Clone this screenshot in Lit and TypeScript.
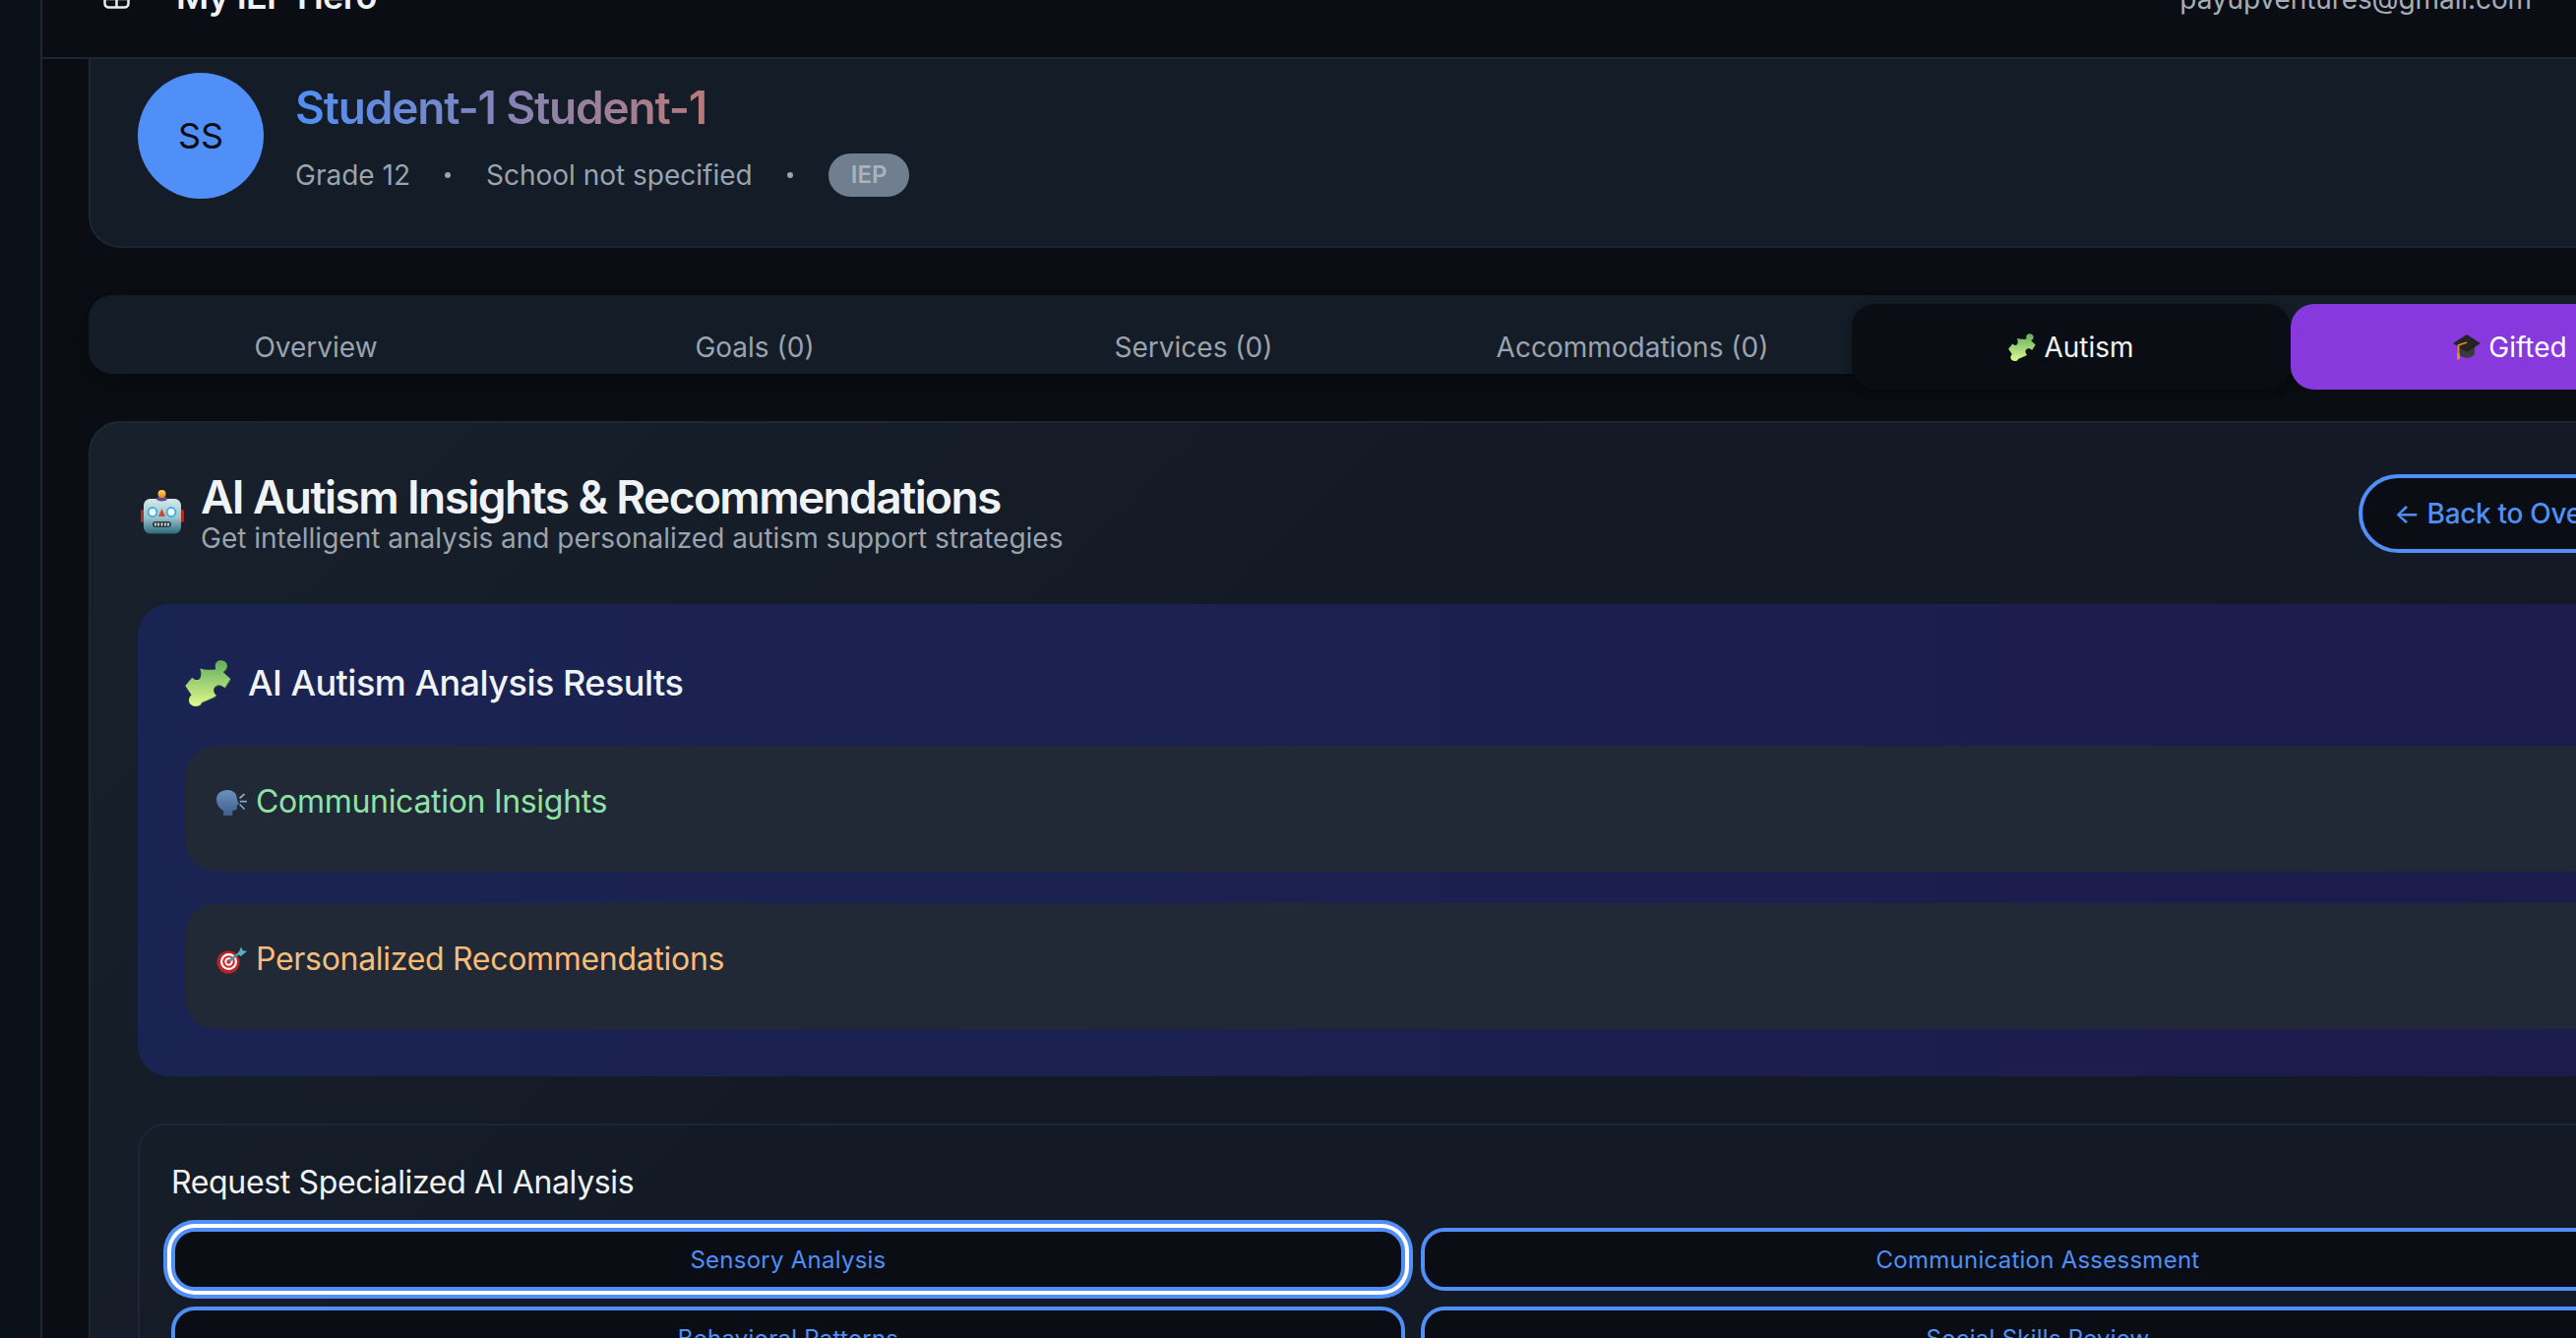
import { LitElement, css, html, svg } from 'lit'
import { customElement, state } from 'lit/decorators.js'
import { classMap } from 'lit/directives/class-map.js'

const PUZZLE_D =
  'M100 86C115 90 135 92 150 88C144 70 154 60 168 61C184 62 192 80 178 92C174 95 172 96 174 98L196 118L178 146C168 136 156 134 148 142C140 150 142 162 152 170C140 178 120 186 106 192C104 204 84 208 72 198C62 188 66 176 74 168L55 140L76 114C86 124 98 124 102 114C106 104 104 94 100 86Z'

const puzzle = (cls: string) => html`
  <svg class=${cls} viewBox="54 60 144 144" aria-hidden="true">
    <defs>
      <linearGradient id="pz-${cls}" x1="0" y1="0" x2="0" y2="1">
        <stop offset="0" stop-color="#62ad5c" />
        <stop offset="1" stop-color="#e0f98f" />
      </linearGradient>
    </defs>
    <path transform="translate(1 3)" fill="#3a5a30" d=${PUZZLE_D} />
    <path fill="url(#pz-${cls})" d=${PUZZLE_D} />
  </svg>
`

const robot = html`
  <svg class="ico-robot" viewBox="0 0 44 46" aria-hidden="true">
    <defs>
      <linearGradient id="rb-head" x1="0" y1="0" x2="0" y2="1">
        <stop offset="0" stop-color="#d5ebec" />
        <stop offset=".55" stop-color="#98c3c8" />
        <stop offset="1" stop-color="#2c6a7d" />
      </linearGradient>
      <linearGradient id="rb-ball" x1="0" y1="0" x2="0" y2="1">
        <stop offset="0" stop-color="#ffd75a" />
        <stop offset="1" stop-color="#e8861a" />
      </linearGradient>
    </defs>
    <rect x="0" y="21" width="4" height="13" rx="1.5" fill="#a92c26" />
    <rect x="40" y="21" width="4" height="13" rx="1.5" fill="#a92c26" />
    <rect x="3" y="10" width="38" height="35.5" rx="6.5" fill="url(#rb-head)" />
    <ellipse cx="21.5" cy="10" rx="5.5" ry="2.6" fill="#64498f" />
    <circle cx="21.5" cy="5" r="4" fill="url(#rb-ball)" />
    <circle cx="12" cy="23.5" r="4.4" fill="#fff" stroke="#3eb0ec" stroke-width="2" />
    <circle cx="31" cy="23.5" r="4.4" fill="#fff" stroke="#3eb0ec" stroke-width="2" />
    <polygon points="21.5,20 25,28 18,28" fill="#c9493f" />
    <rect x="12" y="33" width="19" height="6" rx="3" fill="#2c3c44" />
    <path d="M15 34.5v3M18 34.5v3M21.5 34.5v3M25 34.5v3M28 34.5v3" stroke="#e8eef0" stroke-width="1.6" />
  </svg>
`

const speaker = html`
  <svg class="ico-small" viewBox="0 0 31 28" aria-hidden="true">
    <defs>
      <linearGradient id="sp-head" x1="0" y1="0" x2="0" y2="1">
        <stop offset="0" stop-color="#6c90bd" />
        <stop offset="1" stop-color="#3f5f8c" />
      </linearGradient>
    </defs>
    <path
      fill="url(#sp-head)"
      d="M7 27V22C3 20 0 15.5 0 10.5C0 4.500 5 1 11 1C16.5 1 20 4 20.5 8L21.5 12.5L23 15L21 16L20.8 19.5C20.5 21.5 19 22 16.5 21.8L16 27Z"
    />
    <path d="M24 9L28 5.5M24.5 12.7H30.5M24 16L28 20" stroke="#86a8c4" stroke-width="1.7" stroke-linecap="round" />
  </svg>
`

const dart = html`
  <svg class="ico-small" viewBox="0 0 31 28" aria-hidden="true">
    <circle cx="12" cy="16" r="11.5" fill="#b92426" />
    <circle cx="12.5" cy="15.5" r="8.5" fill="#fff" />
    <circle cx="12.5" cy="15.5" r="6.3" fill="#d0292c" />
    <circle cx="12.5" cy="15.5" r="4.2" fill="#fff" />
    <circle cx="12.5" cy="15.5" r="2.2" fill="#d0292c" />
    <path d="M13 15L24 6" stroke="#4d8f9c" stroke-width="2.4" />
    <path d="M22 8L25 0.5L26.5 4L31 5L24.5 10Z" fill="#57b4c4" />
  </svg>
`

const cap = html`
  <svg class="ico-cap" viewBox="0 0 28 26" aria-hidden="true">
    <path d="M6 12V20C10 25 18 25 22 20V12Z" fill="#3b3b3d" />
    <polygon points="14,0 28,9 14,18 0,9" fill="#232325" />
    <path d="M14 8L5.5 11V22" fill="none" stroke="#e08a24" stroke-width="1.8" />
    <rect x="4" y="19" width="3" height="6.5" rx="1" fill="#e08a24" />
  </svg>
`

const TABS = [
  { label: 'Overview' },
  { label: 'Goals (0)' },
  { label: 'Services (0)' },
  { label: 'Accommodations (0)' },
  { label: 'Autism', icon: puzzle('ico-tab'), kind: 'dark' },
  { label: 'Gifted', icon: cap, kind: 'purple' },
]

const ACTIONS = ['Sensory Analysis', 'Communication Assessment', 'Behavioral Patterns', 'Social Skills Review']

@customElement('app-root')
export class AppRoot extends LitElement {
  @state() private focused = 'Sensory Analysis'

  static styles = css`
    :host {
      display: block;
      width: 100vw;
      height: 100vh;
      overflow: hidden;
      background: #0a0e14;
      color: #f0f3f6;
      font-family: Inter, 'Liberation Sans', sans-serif;
      -webkit-font-smoothing: antialiased;
    }
    * { box-sizing: border-box; }

    .shell { display: flex; height: 100%; }
    .rail {
      flex: none;
      width: 43px;
      background: #0a1118;
      border-right: 2px solid #1c2733;
    }
    .main { flex: 1; min-width: 0; overflow: hidden; }

    .topbar {
      height: 60px;
      display: flex;
      align-items: flex-end;
      justify-content: space-between;
      padding: 0 45px 0 62px;
      background: #0a0e14;
      border-bottom: 2px solid #1c2733;
      overflow: hidden;
      position: relative;
      z-index: 1;
    }
    .brand { display: flex; align-items: flex-end; gap: 47px; margin-bottom: 40px; }
    .brand svg { width: 27px; height: 27px; margin-bottom: 9px; color: #e8ecf0; }
    .brand span { font-size: 36px; line-height: 44px; font-weight: 600; letter-spacing: -0.7px; color: #f0f3f6; }
    .email { font-size: 28px; line-height: 34px; letter-spacing: -0.1px; color: #a5adb8; margin-bottom: 42px; }

    .content { width: 2692px; margin-left: 47px; }

    .profile {
      display: flex;
      gap: 32px;
      padding: 14px 48px 48px;
      background: #141c27;
      border: 2px solid #1c2733;
      border-top: 0;
      border-radius: 0 0 32px 32px;
    }
    .avatar {
      flex: none;
      width: 128px;
      height: 128px;
      border-radius: 50%;
      background: #4f8ff7;
      color: #0a0e14;
      display: flex;
      align-items: center;
      justify-content: center;
      font-size: 36px;
    }
    .name {
      margin: 8px 0 0;
      width: fit-content;
      font-size: 46px;
      line-height: 54px;
      font-weight: 600;
      letter-spacing: -1.2px;
      background: linear-gradient(90deg, #4f8ff7, #b87a78);
      -webkit-background-clip: text;
      background-clip: text;
      color: transparent;
    }
    .meta {
      display: flex;
      align-items: center;
      gap: 35.5px;
      margin-top: 20px;
      font-size: 28px;
      line-height: 44px;
      color: #9aa3ae;
    }
    .dot { width: 6px; height: 6px; border-radius: 50%; background: #9aa3ae; }
    .badge {
      height: 44px;
      padding: 0 23px;
      border-radius: 22px;
      background: #6f7f90;
      color: #a9b3bd;
      font-size: 24px;
      font-weight: 600;
      display: flex;
      align-items: center;
    }

    .tabs {
      display: flex;
      height: 80px;
      margin-top: 48px;
      padding: 9px 8px 0;
      background: #141c27;
      border-radius: 24px;
      box-shadow: 0 8px 32px rgba(0, 0, 0, 0.45);
    }
    .tab {
      flex: 1 1 0;
      height: 87px;
      display: flex;
      align-items: center;
      justify-content: center;
      gap: 8px;
      font-size: 28px;
      color: #9aa3ae;
      border-radius: 24px;
    }
    .tab.dark { background: #0a0e14; color: #f0f3f6; box-shadow: 0 2px 8px rgba(0, 0, 0, 0.3); }
    .tab.purple { background: #8839de; color: #fff; }
    .ico-tab { width: 28px; height: 28px; }
    .ico-cap { width: 28px; height: 26px; }

    .panel {
      margin-top: 48px;
      padding: 48px;
      background: linear-gradient(135deg, #17202b, #131a25 40%);
      border: 2px solid #1c2733;
      border-radius: 32px;
    }
    .panel-head { display: flex; align-items: center; justify-content: space-between; height: 88px; }
    .panel-title { display: flex; align-items: center; gap: 17px; padding: 0 0 3px 3px; }
    .ico-robot { width: 44px; height: 46px; margin-top: -2px; }
    .panel-title h2 {
      margin: 0;
      font-size: 46px;
      line-height: 54px;
      font-weight: 600;
      letter-spacing: -1.6px;
      color: #f0f3f6;
    }
    .panel-title p { margin: -2px 0 0; font-size: 28px; line-height: 34px; color: #9aa3ae; }
    .back {
      width: 335px;
      height: 80px;
      border: 4px solid #4f8ff7;
      border-radius: 40px;
      background: #0a0e14;
      color: #4f8ff7;
      font: inherit;
      font-size: 28px;
      font-weight: 500;
      letter-spacing: -0.3px;
      padding: 0;
      white-space: nowrap;
    }

    .results {
      margin-top: 48px;
      padding: 48px;
      height: 480px;
      border-radius: 32px;
      background: linear-gradient(90deg, #1a2452, #1c1b4c);
    }
    .results-title {
      display: flex;
      align-items: center;
      gap: 17px;
      height: 64px;
      margin: 0 0 32px;
      font-size: 36px;
      font-weight: 500;
      letter-spacing: -0.5px;
      color: #f0f3f6;
    }
    .ico-results { width: 47px; height: 47px; }
    .result {
      height: 128px;
      padding: 33px 32px 0;
      border-radius: 32px;
      background: #222936;
      display: flex;
      align-items: flex-start;
      gap: 9px;
      font-size: 32px;
      line-height: 48px;
      letter-spacing: -0.3px;
    }
    .result + .result { margin-top: 32px; }
    .result.green { color: #8fe3a4; }
    .result.orange { color: #f6bd7b; }
    .ico-small { width: 31px; height: 28px; margin-top: 11px; flex: none; }

    .request {
      margin-top: 48px;
      padding: 32px;
      border: 2px solid #1c2733;
      border-radius: 28px;
    }
    .request h3 {
      margin: 2px 0 22px;
      font-size: 32px;
      line-height: 48px;
      font-weight: 400;
      letter-spacing: -0.35px;
      color: #f0f3f6;
    }
    .actions { display: grid; grid-template-columns: 1fr 1fr; gap: 16px; }
    .action {
      height: 64px;
      border: 4px solid #4f8ff7;
      border-radius: 24px;
      background: #0a0e14;
      color: #4f8ff7;
      font: inherit;
      font-size: 24px;
      letter-spacing: 0.25px;
    }
    .action.focus { box-shadow: 0 0 0 4px #fff, 0 0 0 8px #4f8ff7; }
  `

  render() {
    return html`
      <div class="shell">
        <div class="rail"></div>
        <div class="main">
          <header class="topbar">
            <div class="brand">
              <svg viewBox="0 0 27 27" fill="none" stroke="currentColor" stroke-width="2.5" aria-hidden="true">
                ${svg`<rect x="1.5" y="1.5" width="24" height="24" rx="4" /><path d="M1.5 17H25.5M13.5 17V25.5" />`}
              </svg>
              <span>My IEP Hero</span>
            </div>
            <div class="email">payupventures@gmail.com</div>
          </header>

          <div class="content">
            <section class="profile">
              <div class="avatar">SS</div>
              <div>
                <h1 class="name">Student-1 Student-1</h1>
                <div class="meta">
                  <span>Grade 12</span>
                  <i class="dot"></i>
                  <span>School not specified</span>
                  <i class="dot"></i>
                  <span class="badge">IEP</span>
                </div>
              </div>
            </section>

            <nav class="tabs">
              ${TABS.map(
                (t) => html`
                  <div class=${classMap({ tab: true, [t.kind ?? 'plain']: true })}>${t.icon ?? ''}<span>${t.label}</span></div>
                `,
              )}
            </nav>

            <section class="panel">
              <div class="panel-head">
                <div class="panel-title">
                  ${robot}
                  <div>
                    <h2>AI Autism Insights &amp; Recommendations</h2>
                    <p>Get intelligent analysis and personalized autism support strategies</p>
                  </div>
                </div>
                <button class="back">← Back to Overview</button>
              </div>

              <div class="results">
                <h3 class="results-title">${puzzle('ico-results')}AI Autism Analysis Results</h3>
                <div class="result green">${speaker}<span>Communication Insights</span></div>
                <div class="result orange">${dart}<span>Personalized Recommendations</span></div>
              </div>

              <div class="request">
                <h3>Request Specialized AI Analysis</h3>
                <div class="actions">
                  ${ACTIONS.map(
                    (a) => html`<button class=${classMap({ action: true, focus: a === this.focused })}>${a}</button>`,
                  )}
                </div>
              </div>
            </section>
          </div>
        </div>
      </div>
    `
  }
}
